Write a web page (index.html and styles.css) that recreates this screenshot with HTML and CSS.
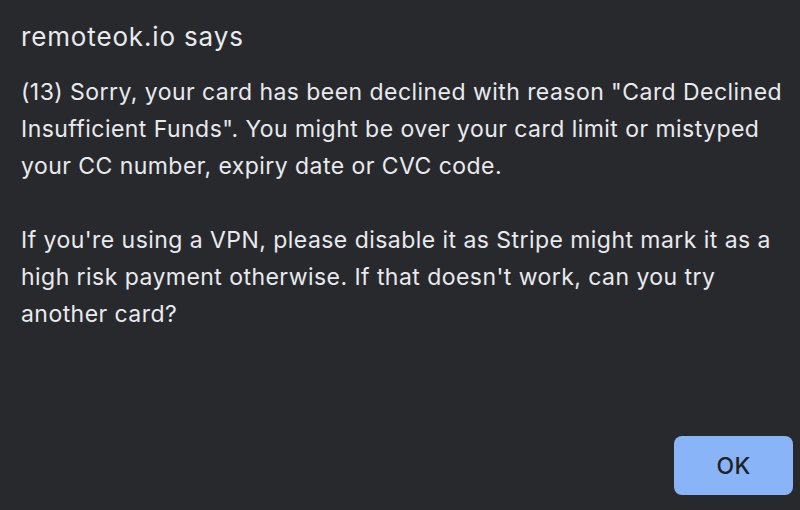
FILE: index.html
```html
<!DOCTYPE html>
<html>
<head>
<meta charset="utf-8">
<link rel="stylesheet" href="styles.css">
</head>
<body>
<div class="dialog">
  <div class="title">remoteok.io says</div>
  <div class="message">
    <p class="line">(13) Sorry, your card has been declined with reason "Card Declined</p>
    <p class="line">Insufficient Funds". You might be over your card limit or mistyped</p>
    <p class="line">your CC number, expiry date or CVC code.</p>
    <p class="line blank">&nbsp;</p>
    <p class="line">If you're using a VPN, please disable it as Stripe might mark it as a</p>
    <p class="line">high risk payment otherwise. If that doesn't work, can you try</p>
    <p class="line">another card?</p>
  </div>
  <div class="actions">
    <button class="ok">OK</button>
  </div>
</div>
</body>
</html>
```
FILE: styles.css
```css
html, body {
  margin: 0;
  padding: 0;
  background: #28292d;
  width: 800px;
  height: 510px;
  overflow: hidden;
}
.dialog {
  box-sizing: border-box;
  width: 800px;
  height: 510px;
  padding: 20px 7px 15px 21px;
  display: flex;
  flex-direction: column;
  font-family: Inter, "Noto Sans", sans-serif;
  color: #e8eaed;
}
.title {
  font-size: 26px;
  letter-spacing: 0.85px;
  line-height: 34px;
  margin-bottom: 20px;
}
.message {
  font-size: 23px;
  letter-spacing: 0.45px;
  line-height: 37px;
}
.line {
  margin: 0;
  white-space: nowrap;
}
.actions {
  margin-top: auto;
  display: flex;
  justify-content: flex-end;
}
.ok {
  width: 119px;
  height: 59px;
  border: none;
  border-radius: 8px;
  background: #8ab4f8;
  color: #202124;
  font-family: Inter, "Noto Sans", sans-serif;
  font-size: 23px;
  letter-spacing: 0.3px;
  font-weight: 500;
}
```
